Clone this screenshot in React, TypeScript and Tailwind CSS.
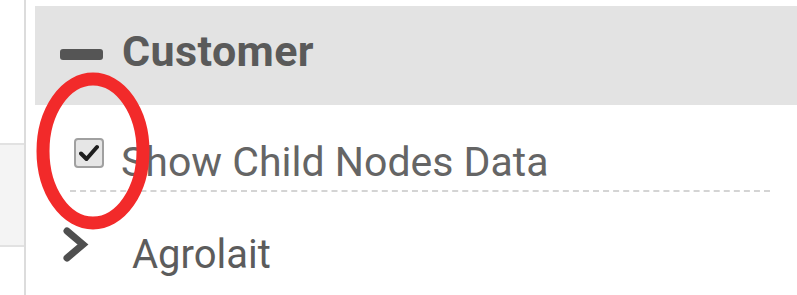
import React from "react";

export default function App() {
  return (
    <div
      className="relative w-[797px] h-[295px] overflow-hidden bg-white flex"
      style={{ fontFamily: "Roboto, 'Noto Sans', sans-serif" }}
    >
      {/* left panel */}
      <div className="w-[26px] shrink-0 border-r-2 border-[#dcdcdc] flex flex-col">
        <div className="h-[143px]" />
        <div className="h-[104px] bg-[#f4f4f4] border-y-2 border-[#e2e2e2]" />
        <div className="flex-1" />
      </div>
      <div className="w-[9px] shrink-0" />
      {/* main panel */}
      <div className="flex-1 flex flex-col">
        <div className="mt-[6px] h-[99px] bg-[#e3e3e3] flex items-center pl-[25px]">
          <div className="w-[43px] h-[11px] rounded-[3px] bg-[#555555] -mt-[2px]" />
          <span className="ml-[19px] text-[43px] tracking-[0.4px] font-bold text-[#5a5a5a] leading-none -mt-[8px]">
            Customer
          </span>
        </div>
        <div className="ml-[35px] mr-[27px] h-[87px] flex items-start border-b-2 border-dashed border-[#d4d4d4]">
          <div className="mt-[33px] ml-[4px] w-[30px] h-[30px] rounded-[4px] border-2 border-[#a0a0a0] bg-[#e6e6e6] flex items-center justify-center">
            <svg width="20" height="18" viewBox="0 0 20 18">
              <path
                d="M2 9.5 L7.5 15 L18 3"
                fill="none"
                stroke="#1e1e1e"
                strokeWidth="4"
                strokeLinecap="round"
                strokeLinejoin="round"
              />
            </svg>
          </div>
          <span className="mt-[37px] ml-[17px] text-[41px] text-[#656565] leading-none">
            Show Child Nodes Data
          </span>
        </div>
        <div className="flex items-start pl-[28px]">
          <svg width="28" height="36" viewBox="0 0 28 36" className="mt-[35px]">
            <path
              d="M4 4 L20 17.5 L4 31"
              fill="none"
              stroke="#4f4f4f"
              strokeWidth="7"
              strokeLinecap="round"
              strokeLinejoin="miter"
            />
          </svg>
          <span className="mt-[43px] ml-[41px] text-[40px] text-[#5c5c5c] leading-none">
            Agrolait
          </span>
        </div>
      </div>
      {/* red annotation ellipse */}
      <svg
        className="absolute left-0 top-0 pointer-events-none"
        width="797"
        height="295"
      >
        <ellipse
          cx="93"
          cy="151"
          rx="50"
          ry="72"
          fill="none"
          stroke="#f22a2a"
          strokeWidth="13"
        />
      </svg>
    </div>
  );
}
